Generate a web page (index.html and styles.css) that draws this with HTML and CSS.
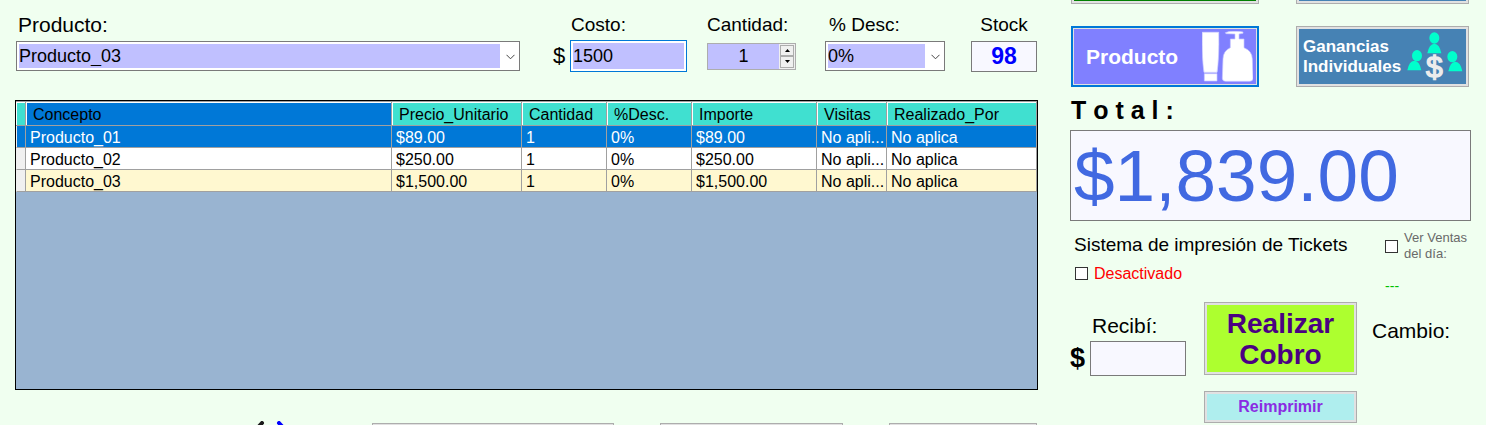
FILE: index.html
```html
<!DOCTYPE html>
<html lang="es">
<head>
  <meta charset="UTF-8" />
  <meta name="viewport" content="width=device-width, initial-scale=1.0"/>
  <title>Punto de Venta</title>
  <link rel="stylesheet" href="styles.css">
</head>
<body>
  <div class="pos">

    <!-- Captura y lista -->
    <main class="sale">
      <form class="entry">
        <div class="field field-product">
          <label class="big" for="product">Producto:</label>
          <div class="control">
            <div class="combo">
              <select id="product">
                <option>Producto_01</option>
                <option>Producto_02</option>
                <option selected>Producto_03</option>
              </select>
              <svg class="chevron" viewBox="0 0 9 6"><path d="M0.5 0.8 L4.5 4.8 L8.5 0.8"/></svg>
            </div>
          </div>
        </div>

        <div class="field field-cost">
          <label for="cost">Costo:</label>
          <div class="control">
            <span class="currency">$</span>
            <input class="cost" type="text" id="cost" value="1500">
          </div>
        </div>

        <div class="field field-qty">
          <label for="qty">Cantidad:</label>
          <div class="control">
            <div class="spinner">
              <input type="text" id="qty" value="1">
              <div class="spin-buttons">
                <button type="button" aria-label="Más"><svg viewBox="0 0 5 3"><path d="M0 3 L2.5 0 L5 3 Z"/></svg></button>
                <button type="button" aria-label="Menos"><svg viewBox="0 0 5 3"><path d="M0 0 L2.5 3 L5 0 Z"/></svg></button>
              </div>
            </div>
          </div>
        </div>

        <div class="field field-discount">
          <label for="discount">% Desc:</label>
          <div class="control">
            <div class="combo">
              <select id="discount">
                <option>0%</option>
                <option>10%</option>
              </select>
              <svg class="chevron" viewBox="0 0 9 6"><path d="M0.5 0.8 L4.5 4.8 L8.5 0.8"/></svg>
            </div>
          </div>
        </div>

        <div class="field field-stock">
          <label for="stock">Stock</label>
          <div class="control">
            <input class="stock" type="text" id="stock" value="98" readonly>
          </div>
        </div>
      </form>

      <div class="grid">
        <table>
          <colgroup>
            <col class="col-row"><col><col class="col-price"><col class="col-qty"><col class="col-qty"><col class="col-amount"><col class="col-visits"><col class="col-by">
          </colgroup>
          <thead>
            <tr>
              <th></th>
              <th class="current">Concepto</th>
              <th>Precio_Unitario</th>
              <th>Cantidad</th>
              <th>%Desc.</th>
              <th>Importe</th>
              <th>Visitas</th>
              <th>Realizado_Por</th>
            </tr>
          </thead>
          <tbody>
            <tr class="selected">
              <td class="row-head"></td>
              <td>Producto_01</td>
              <td>$89.00</td>
              <td>1</td>
              <td>0%</td>
              <td>$89.00</td>
              <td>No apli...</td>
              <td>No aplica</td>
            </tr>
            <tr>
              <td class="row-head"></td>
              <td>Producto_02</td>
              <td>$250.00</td>
              <td>1</td>
              <td>0%</td>
              <td>$250.00</td>
              <td>No apli...</td>
              <td>No aplica</td>
            </tr>
            <tr class="alt">
              <td class="row-head"></td>
              <td>Producto_03</td>
              <td>$1,500.00</td>
              <td>1</td>
              <td>0%</td>
              <td>$1,500.00</td>
              <td>No apli...</td>
              <td>No aplica</td>
            </tr>
          </tbody>
        </table>
      </div>

      <div class="bottom-bar">
        <svg class="arrows" viewBox="0 0 40 30">
          <path d="M12 2 L3 12 L12 22" stroke="#1a1a1a"/>
          <path d="M29 2 L38 12 L29 22" stroke="#0000ff"/>
        </svg>
        <button class="btn bar-wide" type="button" aria-label="Agregar"></button>
        <button class="btn bar-mid" type="button" aria-label="Quitar"></button>
        <button class="btn bar-small" type="button" aria-label="Limpiar"></button>
      </div>
    </main>

    <!-- Cobro -->
    <aside class="checkout">
      <div class="tiles">
        <button class="btn tile green" type="button" aria-label="Servicio"></button>
        <button class="btn tile steel" type="button" aria-label="Ganancias"></button>
        <button class="btn tile product" type="button">
          <span>Producto</span>
          <svg viewBox="0 0 153 153">
            <path d="M1 4 H50 L45 124 H7 Z M7 128 H45 V150 H7 Z"/>
            <path d="M1 4 Q-1 80 6 124 H45 Q52 80 50 4 Z"/>
            <path d="M70 5 Q82 0 98 1 Q112 0 123 3 V7 L111 9 V24 H126 V50 Q151 60 151 84 L153 142 Q153 151 143 151 H71 Q61 151 61 142 L63 84 Q63 60 85 50 V24 H99 V9 L72 8 Z"/>
          </svg>
        </button>
        <button class="btn tile steel earnings" type="button">
          <span>Ganancias<br>Individuales</span>
          <svg viewBox="0 0 168 150">
            <g fill="#00ffcc">
              <ellipse cx="82" cy="18" rx="15" ry="17"/>
              <path d="M61 64 Q66 36 82 35 Q98 36 103 64 Z"/>
              <ellipse cx="30" cy="71" rx="15" ry="17"/>
              <path d="M1 115 Q6 87 22 86 Q38 87 43 115 Z"/>
              <ellipse cx="136" cy="74" rx="15" ry="17"/>
              <path d="M124 118 Q129 90 145 89 Q161 90 166 118 Z"/>
            </g>
            <text x="82" y="136" text-anchor="middle">$</text>
          </svg>
        </button>
      </div>

      <label class="total-label" for="total">T o t a l :</label>
      <input class="total" type="text" id="total" value="$1,839.00" readonly>

      <div class="options">
        <div class="tickets">
          <div class="tickets-title">Sistema de impresión de Tickets</div>
          <label class="check off" for="tickets"><input type="checkbox" id="tickets">Desactivado</label>
        </div>
        <div class="day-sales">
          <label class="check small" for="daySales"><input type="checkbox" id="daySales"><span>Ver Ventas<br>del día:</span></label>
          <div class="dashes">---</div>
        </div>
      </div>

      <div class="pay">
        <div class="received">
          <label for="received">Recibí:</label>
          <div class="received-row">
            <span>$</span>
            <input type="text" id="received">
          </div>
        </div>
        <div class="pay-buttons">
          <button class="btn charge" type="button">Realizar<br>Cobro</button>
          <button class="btn reprint" type="button">Reimprimir</button>
        </div>
        <div class="change">Cambio:</div>
      </div>
    </aside>

  </div>
</body>
</html>
```

FILE: styles.css
```css
* {
  box-sizing: border-box;
}

body {
  margin: 0;
  background-color: #f0fff0;
  color: #000;
  font-family: "Liberation Sans", Arial, sans-serif;
  font-size: 16px;
}

input, select, button {
  margin: 0;
  padding: 0;
  border-radius: 0;
  font-family: inherit;
  color: inherit;
}

.pos {
  display: flex;
  gap: 32px;
  height: 100vh;
  padding: 0 15px;
  overflow: hidden;
}

.sale {
  flex: 1;
  min-width: 0;
}

/* Captura */
.entry {
  display: flex;
  gap: 20px;
  padding: 10px 1px 0;
}

.field {
  display: flex;
  flex-direction: column;
}

.field label {
  height: 30px;
  padding-left: 1px;
  font-size: 19px;
  line-height: 30px;
}

.field label.big {
  padding-left: 2px;
  font-size: 21px;
}

.control {
  display: flex;
  align-items: center;
  height: 32px;
}

.field-product {
  flex: 1;
}

.field-cost {
  width: 134px;
  margin-left: 13px;
}

.field-cost label {
  padding-left: 18px;
}

.field-qty {
  width: 89px;
}

.field-qty label {
  padding-left: 0;
}

.field-discount {
  width: 120px;
  margin-left: 9px;
}

.field-discount label {
  padding-left: 4px;
}

.field-stock {
  width: 66px;
  margin-left: 6px;
}

.field-stock label {
  padding: 0;
  text-align: center;
}

.combo {
  position: relative;
  flex: 1;
  border: 1px solid #7a7a7a;
}

.combo select {
  display: block;
  appearance: none;
  width: 100%;
  height: 28px;
  border: 2px solid #fff;
  border-right-width: 19px;
  background-color: #c0c0ff;
  font-size: 18px;
}

.chevron {
  position: absolute;
  top: 12px;
  right: 4px;
  width: 9px;
  height: 6px;
  fill: none;
  stroke: #444;
  pointer-events: none;
}

.currency {
  width: 17px;
  font-size: 22px;
}

.cost {
  flex: 1;
  min-width: 0;
  height: 32px;
  padding-left: 2px;
  border: 1px solid #0078d7;
  outline: 2px solid #fff;
  outline-offset: -3px;
  background-color: #c0c0ff;
  font-size: 18px;
}

.spinner {
  display: flex;
  flex: 1;
  min-width: 0;
  height: 27px;
  border: 1px solid #adadad;
  background-color: #c0c0ff;
}

.spinner input {
  flex: 1;
  min-width: 0;
  border: none;
  background: none;
  font-size: 18px;
  text-align: center;
}

.spin-buttons {
  display: flex;
  flex-direction: column;
  width: 16px;
  padding: 1px;
  background-color: #f0f0f0;
}

.spin-buttons button {
  display: flex;
  flex: 1;
  align-items: center;
  justify-content: center;
  border: 1px solid #adadad;
  background-color: #f0f0f0;
}

.spin-buttons svg {
  width: 5px;
  height: 3px;
}

.stock {
  width: 100%;
  height: 31px;
  border: 1px solid #7a7a7a;
  background-color: #f8f8ff;
  color: #0000ff;
  font-size: 23px;
  font-weight: bold;
  text-align: center;
}

/* Lista de conceptos */
.grid {
  height: 290px;
  margin-top: 28px;
  border: 1px solid #000;
  background-color: #99b4d1;
}

table {
  width: 100%;
  table-layout: fixed;
  border-spacing: 0;
}

.col-row { width: 10px; }
.col-price { width: 130px; }
.col-qty { width: 85px; }
.col-amount { width: 125px; }
.col-visits { width: 70px; }
.col-by { width: 150px; }

th, td {
  overflow: hidden;
  padding: 2px 0 0 4px;
  border-right: 1px solid #a0a0a0;
  border-bottom: 1px solid #a0a0a0;
  text-align: left;
  white-space: nowrap;
}

th {
  height: 25px;
  padding-left: 7px;
  border-top: 1px solid #a0a0a0;
  background-color: #40e0d0;
  box-shadow: inset 1px 1px #fff;
  font-weight: normal;
}

th.current, .selected td {
  background-color: #0078d7;
}

td {
  height: 22px;
  background-color: #fff;
}

.selected td {
  color: #fff;
}

.alt td {
  background-color: #fff8d0;
}

td.row-head {
  border-left: 1px solid #f0f0f0;
}

tr:not(.selected) .row-head {
  background-color: #f0f0f0;
}

/* Botones */
.btn {
  border: 1px solid #adadad;
  box-shadow: inset 0 0 0 2px #e1e1e1;
  background-color: #e1e1e1;
  font-weight: bold;
}

.bottom-bar {
  display: flex;
  justify-content: flex-end;
  align-items: center;
  gap: 46px;
  height: 46px;
  margin-top: 31px;
  padding-right: 1px;
}

.bottom-bar .btn {
  height: 42px;
}

.arrows {
  align-self: flex-start;
  width: 40px;
  height: 30px;
  margin-right: 36px;
  fill: none;
  stroke-width: 4;
  stroke-linecap: round;
}

.bar-wide { width: 242px; }
.bar-mid { width: 183px; }
.bar-small { width: 148px; }

/* Cobro */
.checkout {
  width: 401px;
}

/* la primera fila queda desplazada fuera de la ventana */
.tiles {
  display: grid;
  grid-template-columns: 188px 173px;
  gap: 22px 37px;
  margin-top: -57px;
  padding-left: 1px;
}

.tile {
  display: flex;
  align-items: center;
  justify-content: space-between;
  height: 61px;
  color: #fff;
}

.green {
  background-color: #008000;
}

.steel {
  background-color: #4682b4;
}

.product {
  padding: 0 4px 0 13px;
  border: 2px solid #0078d7;
  box-shadow: inset 0 0 0 1px #e1e1e1;
  background-color: #8080ff;
  font-size: 21px;
}

.product svg {
  width: 51px;
  height: 51px;
  fill: #fff;
  stroke: #c8c8ff;
  stroke-width: 2;
}

.earnings {
  padding: 0 5px 0 6px;
  font-size: 17px;
  line-height: 20px;
  text-align: left;
}

.earnings svg {
  width: 56px;
  height: 50px;
  overflow: visible;
}

.earnings text {
  fill: #ececec;
  stroke: #ececec;
  stroke-width: 4;
  font-size: 90px;
  font-weight: normal;
}

.total-label {
  display: block;
  padding: 4px 0 0 1px;
  font-size: 25px;
  font-weight: bold;
  line-height: 39px;
}

.total {
  display: block;
  width: 100%;
  height: 91px;
  padding-left: 3px;
  border: 1px solid #7a7a7a;
  background-color: #f8f8ff;
  color: #4169e1;
  font-size: 73px;
}

.options {
  display: flex;
  justify-content: space-between;
  height: 81px;
  padding: 9px 4px 0;
}

.tickets-title {
  font-size: 19px;
  line-height: 30px;
}

.check {
  display: flex;
  align-items: center;
  gap: 6px;
}

.check input {
  appearance: none;
  width: 13px;
  height: 13px;
  border: 1px solid #333;
  background-color: #fff;
}

.off {
  height: 27px;
  padding-left: 1px;
  color: #ff0000;
}

.small {
  color: #696969;
  font-size: 13px;
  line-height: 16px;
}

.dashes {
  margin-top: 14px;
  color: #00c000;
  font-size: 14px;
  line-height: 20px;
}

.pay {
  display: flex;
}

.received {
  width: 116px;
  margin-right: 18px;
}

.received label {
  display: block;
  padding: 9px 0 0 22px;
  font-size: 21px;
  line-height: 30px;
}

.received-row {
  display: flex;
  align-items: center;
}

.received-row span {
  width: 20px;
  font-size: 27px;
  font-weight: bold;
}

.received-row input {
  flex: 1;
  min-width: 0;
  height: 35px;
  border: 1px solid #7a7a7a;
  background-color: #f8f8ff;
}

.pay-buttons {
  display: flex;
  flex-direction: column;
  gap: 16px;
  width: 153px;
}

.charge {
  height: 73px;
  background-color: #adff2f;
  color: #4b0082;
  font-size: 28px;
  line-height: 31px;
}

.reprint {
  height: 32px;
  background-color: #afeeee;
  color: #8a2be2;
  font-size: 16px;
}

.change {
  padding: 14px 0 0 15px;
  font-size: 21px;
  line-height: 30px;
}
```
